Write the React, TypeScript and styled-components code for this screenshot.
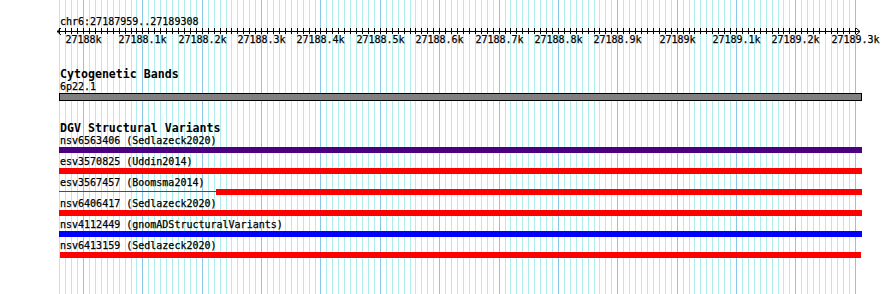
import React from 'react';
import styled, { createGlobalStyle } from 'styled-components';

// view chr6:27187959..27189308 drawn onto x 59..861
const FIRST_GRID_BP = 27187960;
const LAST_GRID_BP = 27189300;
const X0 = 59.3;
const SCALE = 0.5936;
const toX = (bp: number) => Math.round(X0 + (bp - FIRST_GRID_BP) * SCALE);

const gridBps: number[] = [];
for (let bp = FIRST_GRID_BP; bp <= LAST_GRID_BP; bp += 10) gridBps.push(bp);

const majorLabel = (bp: number) => {
  const k = bp / 1000;
  return `${Number.isInteger(k) ? k : k.toFixed(1)}k`;
};

type Segment = { from: number; to: number; thin?: boolean };
type Feature = { label: string; color: string; segments: Segment[] };

const features: Feature[] = [
  { label: 'nsv6563406 (Sedlazeck2020)', color: '#4b0082', segments: [{ from: 59, to: 862 }] },
  { label: 'esv3570825 (Uddin2014)', color: '#ff0000', segments: [{ from: 59, to: 862 }] },
  {
    label: 'esv3567457 (Boomsma2014)',
    color: '#ff0000',
    segments: [
      { from: 59, to: 216, thin: true },
      { from: 216, to: 862 },
    ],
  },
  { label: 'nsv6406417 (Sedlazeck2020)', color: '#ff0000', segments: [{ from: 59, to: 862 }] },
  { label: 'nsv4112449 (gnomADStructuralVariants)', color: '#0000ff', segments: [{ from: 59, to: 862 }] },
  { label: 'nsv6413159 (Sedlazeck2020)', color: '#ff0000', segments: [{ from: 60, to: 861 }] },
];

const GlobalStyle = createGlobalStyle`
  html, body {
    margin: 0;
    padding: 0;
    background: #fff;
  }
  body {
    font-family: 'DejaVu Sans Mono', 'Liberation Mono', monospace;
    color: #000;
  }
`;

const Page = styled.div`
  position: relative;
  width: 890px;
  height: 294px;
  overflow: hidden;
  background: #fff;
`;

const GridLayer = styled.svg`
  position: absolute;
  left: 0;
  top: 0;
  shape-rendering: crispEdges;
`;

const Content = styled.div`
  position: relative;
  display: flex;
  flex-direction: column;
  padding-top: 15px;
`;

const SmallText = styled.div`
  padding-left: 60px;
  font-size: 10px;
  line-height: 13px;
  height: 13px;
  white-space: pre;
  -webkit-text-stroke: 0.25px #000;
`;

const Axis = styled.div`
  position: relative;
  height: 22px;
`;

const AxisSvg = styled.svg`
  display: block;
  shape-rendering: crispEdges;
`;

const TickLabel = styled.span`
  position: absolute;
  top: 5px;
  transform: translateX(-50%);
  font-size: 10px;
  line-height: 13px;
  white-space: pre;
  -webkit-text-stroke: 0.25px #000;
`;

const Track = styled.section<{ $gap: number }>`
  display: flex;
  flex-direction: column;
  margin-top: ${p => p.$gap}px;
`;

const TrackTitle = styled.div`
  padding-left: 60px;
  font-size: 11.6px;
  font-weight: bold;
  line-height: 12px;
  height: 12px;
  white-space: pre;
`;

const BandBar = styled.div`
  box-sizing: border-box;
  margin-left: 59px;
  width: 803px;
  height: 8px;
  background: #808080;
  border: 1px solid #000;
`;

const FeatureRow = styled.div`
  display: flex;
  flex-direction: column;
  margin-bottom: 2px;
`;

const Glyph = styled.div`
  display: flex;
  height: 6px;
`;

const Piece = styled.div<{ $color: string; $thin?: boolean }>`
  flex: none;
  height: ${p => (p.$thin ? '1px' : '6px')};
  margin-top: ${p => (p.$thin ? '2px' : '0')};
  background: ${p => p.$color};
`;

const Grid = () => (
  <GridLayer width={890} height={294}>
    {gridBps.map(bp => {
      const x = toX(bp) + 0.5;
      return (
        <line
          key={bp}
          x1={x}
          x2={x}
          y1={0}
          y2={294}
          stroke={bp % 100 === 0 ? '#88c8ea' : '#b0eeee'}
          strokeWidth={1}
        />
      );
    })}
  </GridLayer>
);

const Ruler = () => (
  <>
    <SmallText>chr6:27187959..27189308</SmallText>
    <Axis>
      <AxisSvg width={890} height={8}>
        <line x1={57} x2={860} y1={3.5} y2={3.5} stroke="#000" />
        {gridBps.map(bp => (
          <line key={bp} x1={toX(bp) + 0.5} x2={toX(bp) + 0.5} y1={0} y2={6} stroke="#000" />
        ))}
        <polyline points="61,0 57,3.5 61,7" fill="none" stroke="#000" shapeRendering="auto" />
        <polyline points="856,0 860,3.5 856,7" fill="none" stroke="#000" shapeRendering="auto" />
      </AxisSvg>
      {gridBps
        .filter(bp => bp % 100 === 0)
        .map(bp => (
          <TickLabel key={bp} style={{ left: toX(bp) + 0.5 }}>
            {majorLabel(bp)}
          </TickLabel>
        ))}
    </Axis>
  </>
);

const App: React.FC = () => {
  return (
    <Page>
      <GlobalStyle />
      <Grid />
      <Content>
        <Ruler />

        <Track $gap={18}>
          <TrackTitle>Cytogenetic Bands</TrackTitle>
          <SmallText>6p22.1</SmallText>
          <BandBar />
        </Track>

        <Track $gap={21}>
          <TrackTitle>DGV Structural Variants</TrackTitle>
          {features.map(f => (
            <FeatureRow key={f.label}>
              <SmallText>{f.label}</SmallText>
              <Glyph style={{ marginLeft: f.segments[0].from }}>
                {f.segments.map((s, i) => (
                  <Piece key={i} $color={f.color} $thin={s.thin} style={{ width: s.to - s.from }} />
                ))}
              </Glyph>
            </FeatureRow>
          ))}
        </Track>
      </Content>
    </Page>
  );
};

export default App;
